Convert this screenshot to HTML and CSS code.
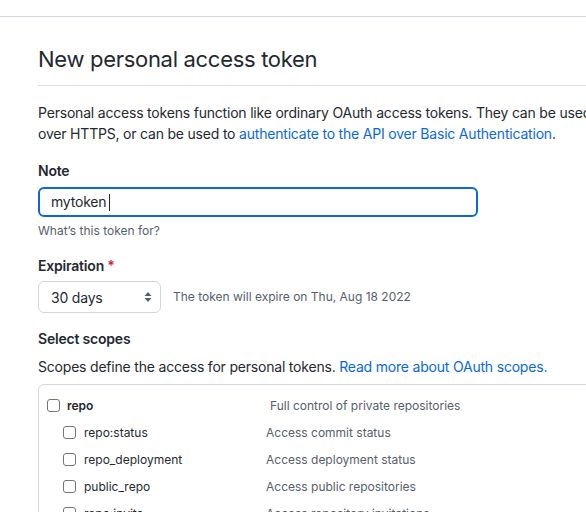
FILE: index.html
```html
<!DOCTYPE html>
<html>
<head>
<meta charset="utf-8">
<link rel="stylesheet" href="styles.css">
</head>
<body>
<div class="topbar"></div>
<main class="content">
  <div class="subhead"><h2 class="subhead-title">New personal access token</h2></div>
  <p class="intro">Personal access tokens function like ordinary OAuth access tokens. They can be used instead of a password for Git over HTTPS, or can be used to <a href="#">authenticate to the API over Basic Authentication</a>.</p>

  <div class="form-group">
    <label class="label">Note</label>
    <div class="input focused"><span>mytoken</span><span class="caret"></span></div>
    <p class="note">What’s this token for?</p>
  </div>

  <div class="form-group expiration">
    <label class="label">Expiration <span class="req">*</span></label>
    <div class="exp-row">
      <div class="select">30 days
        <svg class="arrows" width="8" height="12" viewBox="0 0 8 12"><path d="M4 1 L7.5 5 L0.5 5 Z M4 11 L7.5 7 L0.5 7 Z" fill="#57606a"/></svg>
      </div>
      <span class="exp-note">The token will expire on Thu, Aug 18 2022</span>
    </div>
  </div>

  <div class="scopes">
    <h3 class="label">Select scopes</h3>
    <p class="scopes-desc">Scopes define the access for personal tokens. <a href="#">Read more about OAuth scopes.</a></p>
    <div class="scope-box">
      <div class="row parent"><span class="cb"></span><span class="name">repo</span><span class="desc">Full control of private repositories</span></div>
      <div class="row child"><span class="cb"></span><span class="name">repo:status</span><span class="desc">Access commit status</span></div>
      <div class="row child"><span class="cb"></span><span class="name">repo_deployment</span><span class="desc">Access deployment status</span></div>
      <div class="row child"><span class="cb"></span><span class="name">public_repo</span><span class="desc">Access public repositories</span></div>
      <div class="row child"><span class="cb"></span><span class="name">repo:invite</span><span class="desc">Access repository invitations</span></div>
    </div>
  </div>
</main>
</body>
</html>
```
FILE: styles.css
```css
* { box-sizing: border-box; }
html, body { margin: 0; padding: 0; background: #fff; overflow: hidden; }
body {
  font-family: Inter, "Liberation Sans", sans-serif;
  font-size: 14px;
  line-height: 1.5;
  letter-spacing: -0.2px;
  color: #24292f;
  width: 586px;
  height: 512px;
}
a { color: #0969da; text-decoration: none; }
.topbar { height: 17px; border-bottom: 1px solid #d0d7de; }
.content { padding: 24px 0 0 38px; width: 900px; }
.subhead { border-bottom: 1px solid #d8dee4; padding-bottom: 8px; margin-bottom: 16px; }
.subhead-title { margin: 0; font-size: 22px; font-weight: 400; line-height: 36px; letter-spacing: -0.3px; }
.intro { margin: 0; width: 760px; }
.form-group { margin-top: 16px; }
.label { display: block; margin: 0 0 6px; font-size: 14px; font-weight: 600; line-height: 21px; }
.input {
  width: 440px; height: 30px; border-radius: 6px;
  border: 2px solid #0969da; padding: 0 11px;
  display: flex; align-items: center; line-height: 20px;
}
.caret { display: inline-block; width: 1px; height: 17px; background: #24292f; margin-left: 3px; }
.note { margin: 5px 0 0; font-size: 12px; line-height: 18px; color: #57606a; letter-spacing: 0; }
.expiration { margin-top: 15px; }
.expiration .label { margin-bottom: 5px; }
.req { color: #cf222e; }
.exp-row { display: flex; align-items: center; gap: 12px; }
.select {
  width: 123px; height: 32px; border: 1px solid #d0d7de; border-radius: 6px;
  padding: 0 12px; display: flex; align-items: center; justify-content: space-between;
  background: #fff;
}
.arrows { margin-right: -4px; }
.exp-note { font-size: 12px; color: #57606a; letter-spacing: 0; }
.scopes { margin-top: 15px; }
.scopes .label { margin: 0; }
.scopes-desc { margin: 7px 0 7px; }
.scope-box { border: 1px solid #d0d7de; border-radius: 6px; padding: 7px 0 0 8px; }
.row { display: flex; align-items: center; height: 27px; font-size: 12px; letter-spacing: 0; }
.row .cb { width: 13px; height: 13px; border: 1px solid #767676; border-radius: 3px; flex: none; }
.row .name { margin-left: 7px; }
.parent .name { font-weight: 600; width: 203px; }
.child { padding-left: 16px; }
.child .name { margin-left: 8px; width: 182px; }
.row .desc { color: #57606a; }
```
